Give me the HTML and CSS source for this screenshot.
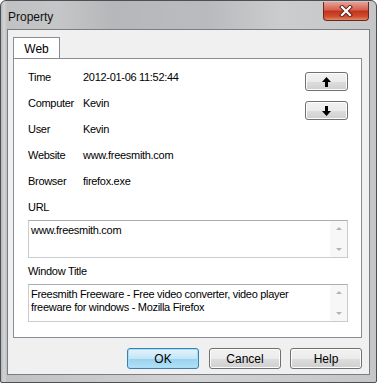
FILE: index.html
```html
<!DOCTYPE html>
<html lang="en">

<head>
    <meta charset="UTF-8">
    <title>Property</title>
    <link rel="stylesheet" href="styles.css">
</head>

<body>
    <div class="window">
        <div class="titlebar">
            <span class="title">Property</span>
            <button class="close">
                <svg width="14" height="12" viewBox="0 0 14 12">
                    <path d="M3 2 L11 10 M11 2 L3 10" stroke="#5a1f1a" stroke-width="4" stroke-linecap="square" />
                    <path d="M3 2 L11 10 M11 2 L3 10" stroke="#fff" stroke-width="2.2" stroke-linecap="square" />
                </svg>
            </button>
        </div>

        <div class="client">
            <div class="tabs">
                <div class="tab">Web</div>
            </div>
            <div class="panel">
                <div class="top">
                    <div class="fields">
                        <div class="row"><span class="label">Time</span><span>2012-01-06 11:52:44</span></div>
                        <div class="row"><span class="label">Computer</span><span>Kevin</span></div>
                        <div class="row"><span class="label">User</span><span>Kevin</span></div>
                        <div class="row"><span class="label">Website</span><span>www.freesmith.com</span></div>
                        <div class="row"><span class="label">Browser</span><span>firefox.exe</span></div>
                    </div>
                    <div class="arrows">
                        <button class="btn arrow">
                            <svg width="9" height="10" viewBox="0 0 9 10">
                                <path d="M4.5 0 L9 5 L6 5 L6 10 L3 10 L3 5 L0 5 Z" fill="#000" />
                            </svg>
                        </button>
                        <button class="btn arrow">
                            <svg width="9" height="10" viewBox="0 0 9 10">
                                <path d="M4.5 10 L9 5 L6 5 L6 0 L3 0 L3 5 L0 5 Z" fill="#000" />
                            </svg>
                        </button>
                    </div>
                </div>

                <div class="row">URL</div>
                <div class="textbox">
                    <div class="text">www.freesmith.com</div>
                    <div class="scroll">
                        <span class="up"></span>
                        <span class="down"></span>
                    </div>
                </div>

                <div class="row">Window Title</div>
                <div class="textbox">
                    <div class="text">Freesmith Freeware - Free video converter, video player freeware for windows - Mozilla Firefox</div>
                    <div class="scroll">
                        <span class="up"></span>
                        <span class="down"></span>
                    </div>
                </div>
            </div>

            <div class="buttons">
                <button class="btn default">OK</button>
                <button class="btn">Cancel</button>
                <button class="btn">Help</button>
            </div>
        </div>
    </div>
</body>

</html>
```

FILE: styles.css
```css
body {
    margin: 0;
    font-family: "Liberation Sans", Arial, sans-serif;
    font-size: 11px;
    background-color: #fff;
}

.window {
    width: 377px;
    height: 383px;
    box-sizing: border-box;
    border: 1px solid #4d4f52;
    border-radius: 6px 6px 2px 2px;
    background: linear-gradient(90deg, #b5b8bb 0, #d3d4d6 3px, #bfc1c3 6px, #d2d3d5 50%, #c4c6c8 100%);
    display: flex;
    flex-direction: column;
}

.titlebar {
    height: 28px;
    display: flex;
    align-items: flex-start;
    /* 模糊的背景窗口 */
    background: linear-gradient(90deg, rgba(255, 255, 255, 0) 15%, rgba(120, 120, 125, 0.25) 30%, rgba(130, 130, 135, 0.3) 55%, rgba(255, 255, 255, 0) 75%);
}

.title {
    padding: 9px 0 0 7px;
    font-size: 12px;
    color: #111;
}

.close {
    margin: 1px 0 0 auto;
    margin-right: 7px;
    width: 46px;
    height: 19px;
    padding: 0;
    border: 1px solid #6b2620;
    border-top: 0;
    border-radius: 0 0 4px 4px;
    background: linear-gradient(#e5a195 0, #d5604c 45%, #c2321b 50%, #cf4d2f 80%, #e08a64 100%);
    display: flex;
    align-items: center;
    justify-content: center;
}

.client {
    margin: 0 6px 7px 6px;
    flex: 1;
    border: 1px solid #7b7d80;
    background-color: #f0f0f0;
    padding: 7px 7px 0 5px;
    display: flex;
    flex-direction: column;
}

.tabs {
    display: flex;
    height: 21px;
}

.tab {
    width: 47px;
    height: 21px;
    background-color: #fff;
    border: 1px solid #898c95;
    border-bottom: 0;
    padding: 4px 0 0 0;
    box-sizing: border-box;
    text-align: center;
    font-size: 12px;
    position: relative;
    z-index: 1;
    margin-bottom: -1px;
}

.panel {
    height: 280px;
    box-sizing: border-box;
    background-color: #fff;
    border: 1px solid #898c95;
    padding: 5px 13px 0 14px;
    letter-spacing: -0.3px;
}

.top {
    display: flex;
}

.fields {
    flex: 1;
}

.row {
    height: 26px;
    display: flex;
    align-items: center;
    color: #000;
}

.label {
    width: 55px;
    flex: none;
}

.arrows {
    display: flex;
    flex-direction: column;
    gap: 10px;
    padding-top: 8px;
}

.btn {
    font-family: "Liberation Sans", Arial, sans-serif;
    font-size: 12px;
    color: #000;
    border: 1px solid #707070;
    border-radius: 3px;
    background: linear-gradient(#f2f2f2 0, #ebebeb 50%, #dddddd 51%, #cfcfcf 100%);
    box-shadow: inset 0 0 0 1px #fcfcfc;
    padding: 0;
}

.arrow {
    width: 43px;
    height: 19px;
    display: flex;
    align-items: center;
    justify-content: center;
}

.textbox {
    width: 320px;
    height: 38px;
    box-sizing: border-box;
    border: 1px solid #c9cbd0;
    border-top-color: #abadb3;
    display: flex;
}

.text {
    flex: 1;
    padding: 3px 0 0 2px;
    line-height: 13px;
}

.scroll {
    width: 17px;
    background-color: #f7f7f7;
    display: flex;
    flex-direction: column;
    justify-content: space-between;
    align-items: center;
    padding: 6px 0 6px;
}

.up,
.down {
    width: 0;
    height: 0;
    border-left: 3px solid transparent;
    border-right: 3px solid transparent;
}

.up {
    border-bottom: 3px solid #b4b4b4;
}

.down {
    border-top: 3px solid #b4b4b4;
}

.buttons {
    display: flex;
    justify-content: flex-end;
    gap: 9px;
    padding-top: 10px;
}

.buttons .btn {
    width: 72px;
    height: 21px;
}

.btn.default {
    border-color: #3c7fb1;
    background: linear-gradient(#e5f4fc 0, #c4e5f6 50%, #98d1ef 51%, #b6e0f4 100%);
    box-shadow: inset 0 0 0 1px #9fe0fc;
    margin-right: 1px;
}
```
